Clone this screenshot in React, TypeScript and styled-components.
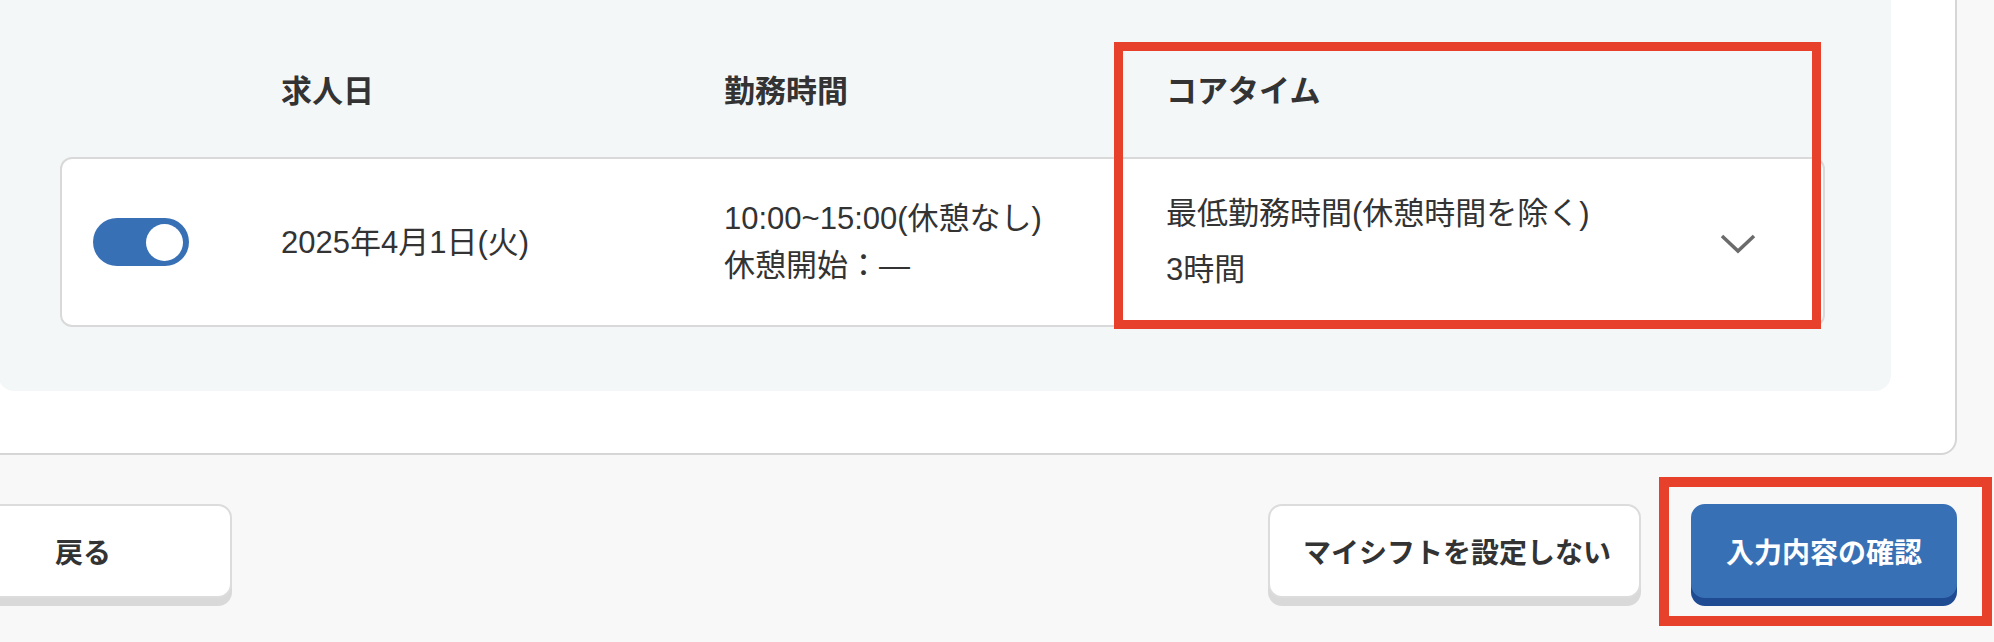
import styled, { createGlobalStyle } from "styled-components";

const GlobalStyle = createGlobalStyle`
  * {
    box-sizing: border-box;
  }
  body {
    margin: 0;
    background: #f8f8f8;
    overflow: hidden;
    font-family: "Liberation Sans", "Noto Sans CJK JP", sans-serif;
    color: #333333;
  }
`;

type Shift = {
  enabled: boolean;
  date: string;
  hours: string;
  breakStart: string;
  coreLabel: string;
  coreValue: string;
};

const shifts: Shift[] = [
  {
    enabled: true,
    date: "2025年4月1日(火)",
    hours: "10:00~15:00(休憩なし)",
    breakStart: "休憩開始：—",
    coreLabel: "最低勤務時間(休憩時間を除く)",
    coreValue: "3時間",
  },
];

const columns = "188px 443px 442px 1fr";

const App = (): JSX.Element => {
  return (
    <Viewport>
      <GlobalStyle />
      <Page>
        <Card>
          <Panel>
            <HeaderRow>
              <span />
              <HeadCell>求人日</HeadCell>
              <HeadCell>勤務時間</HeadCell>
              <HeadCell>コアタイム</HeadCell>
            </HeaderRow>
            {shifts.map((shift) => (
              <ShiftRow key={shift.date}>
                <Toggle $on={shift.enabled} aria-label="toggle">
                  <Knob $on={shift.enabled} />
                </Toggle>
                <Cell>{shift.date}</Cell>
                <Cell>
                  <Line>{shift.hours}</Line>
                  <Line>{shift.breakStart}</Line>
                </Cell>
                <CoreCell>
                  <CoreText>
                    <Line>{shift.coreLabel}</Line>
                    <Line>{shift.coreValue}</Line>
                  </CoreText>
                  <Chevron viewBox="0 0 36 20" aria-hidden="true">
                    <polyline points="2,2 18,17 34,2" />
                  </Chevron>
                </CoreCell>
              </ShiftRow>
            ))}
            <Highlight $top={78} $left={1116} $width={707} $height={287} />
          </Panel>
        </Card>
        <ButtonRow>
          <Button $width={298}>戻る</Button>
          <RightGroup>
            <Button $width={373}>マイシフトを設定しない</Button>
            <Marked>
              <Button $primary>入力内容の確認</Button>
              <Annotation />
            </Marked>
          </RightGroup>
        </ButtonRow>
      </Page>
    </Viewport>
  );
};

const Viewport = styled.div`
  width: 1994px;
  height: 642px;
  overflow: hidden;
`;

const Page = styled.div`
  width: 2023px;
  margin: -100px 0 0 -66px;
  display: flex;
  flex-direction: column;
  gap: 49px;
`;

const Card = styled.section`
  background: #ffffff;
  border: 2px solid #d6d6d6;
  border-radius: 16px;
  padding: 62px 64px 62px 62px;
`;

const Panel = styled.div`
  position: relative;
  background: #f4f7f8;
  border-radius: 16px;
  padding: 105px 66px 64px 62px;
`;

const HeaderRow = styled.div`
  display: grid;
  grid-template-columns: ${columns};
  padding: 0 0 42px 33px;
`;

const HeadCell = styled.div`
  font-size: 31px;
  font-weight: 700;
  line-height: 46px;
  color: #333333;
`;

const ShiftRow = styled.div`
  display: grid;
  grid-template-columns: ${columns};
  align-items: center;
  height: 170px;
  padding: 0 67px 0 31px;
  background: #ffffff;
  border: 2px solid #d9d9d9;
  border-radius: 12px;
`;

const Toggle = styled.div<{ $on: boolean }>`
  width: 96px;
  height: 48px;
  border-radius: 24px;
  background: ${(p) => (p.$on ? "#3870b6" : "#cccccc")};
  display: flex;
  align-items: center;
  justify-content: ${(p) => (p.$on ? "flex-end" : "flex-start")};
  padding: 0 6px;
`;

const Knob = styled.span<{ $on: boolean }>`
  width: 37px;
  height: 37px;
  border-radius: 50%;
  background: #ffffff;
`;

const Cell = styled.div`
  font-size: 31px;
  line-height: 47px;
  color: #333333;
  display: flex;
  flex-direction: column;
`;

const Line = styled.span`
  white-space: nowrap;
`;

const CoreCell = styled.div`
  display: flex;
  align-items: center;
  justify-content: space-between;
`;

const CoreText = styled.div`
  font-size: 31px;
  line-height: 46px;
  color: #333333;
  display: flex;
  flex-direction: column;
  gap: 10px;
`;

const Chevron = styled.svg`
  width: 36px;
  height: 20px;
  margin-top: 4px;
  fill: none;
  stroke: #6b6b6b;
  stroke-width: 3.5;
`;

const Highlight = styled.div<{
  $top: number;
  $left: number;
  $width: number;
  $height: number;
}>`
  position: absolute;
  top: ${(p) => p.$top}px;
  left: ${(p) => p.$left}px;
  width: ${(p) => p.$width}px;
  height: ${(p) => p.$height}px;
  border: 9px solid #e8412b;
  pointer-events: none;
`;

const ButtonRow = styled.div`
  display: flex;
  justify-content: space-between;
  align-items: flex-start;
`;

const RightGroup = styled.div`
  display: flex;
  gap: 50px;
`;

const Marked = styled.div`
  position: relative;
`;

const Annotation = styled.span`
  position: absolute;
  inset: -27px -35px -28px -32px;
  border: 10px solid #e8412b;
  pointer-events: none;
`;

const Button = styled.button<{ $primary?: boolean; $width?: number }>`
  height: 94px;
  width: ${(p) => (p.$width ? `${p.$width}px` : "auto")};
  padding: 0 33px;
  border-radius: 14px;
  font-family: "Liberation Sans", "Noto Sans CJK JP", sans-serif;
  font-size: 28px;
  font-weight: 700;
  white-space: nowrap;
  cursor: pointer;
  color: ${(p) => (p.$primary ? "#ffffff" : "#333333")};
  background: ${(p) => (p.$primary ? "#3870b5" : "#ffffff")};
  border: 2px solid ${(p) => (p.$primary ? "#3870b5" : "#dcdcdc")};
  box-shadow: 0 8px 0 ${(p) => (p.$primary ? "#1f4b93" : "#d9d9d9")};
`;

export default App;
